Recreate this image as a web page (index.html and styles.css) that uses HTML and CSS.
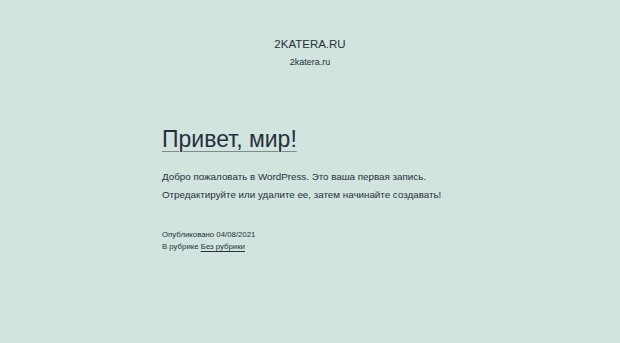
FILE: index.html
```html
<!DOCTYPE html>
<html lang="ru">
<head>
<meta charset="utf-8">
<title>2KATERA.RU</title>
<link rel="stylesheet" href="styles.css">
</head>
<body>
<header class="site-header">
  <p class="site-title">2KATERA.RU</p>
  <p class="site-description">2katera.ru</p>
</header>
<main class="site-main">
  <article class="post">
    <h1 class="entry-title"><a href="#">Привет, мир!</a></h1>
    <div class="entry-content">
      <p>Добро пожаловать в WordPress. Это ваша первая запись.<br>Отредактируйте или удалите ее, затем начинайте создавать!</p>
    </div>
    <footer class="entry-footer">
      <div>Опубликовано 04/08/2021</div>
      <div>В рубрике <a href="#">Без рубрики</a></div>
    </footer>
  </article>
</main>
</body>
</html>
```
FILE: styles.css
```css
html, body {
  margin: 0;
  padding: 0;
}
body {
  background: #d1e4dd;
  color: #28303d;
  font-family: "Liberation Sans", Arial, sans-serif;
  height: 343px;
}
a {
  color: #28303d;
}
.site-header {
  display: flex;
  flex-direction: column;
  align-items: center;
  padding-top: 38px;
}
.site-title {
  margin: 0;
  font-size: 11.5px;
  line-height: 12px;
}
.site-description {
  margin: 6px 0 0;
  font-size: 9px;
  line-height: 12px;
}
.site-main {
  padding: 58px 0 0 162px;
}
.entry-title {
  margin: 0;
  font-size: 23px;
  font-weight: normal;
  line-height: 27px;
}
.entry-title a {
  text-decoration: underline;
  text-decoration-thickness: 1px;
  text-underline-offset: 4px;
  text-decoration-color: #7f8a8f;
}
.entry-content p {
  margin: 15px 0 0;
  font-size: 9.8px;
  line-height: 17.5px;
}
.entry-footer {
  margin-top: 26px;
  font-size: 7.8px;
  line-height: 12px;
}
.entry-footer a {
  text-underline-offset: 2px;
}
```
